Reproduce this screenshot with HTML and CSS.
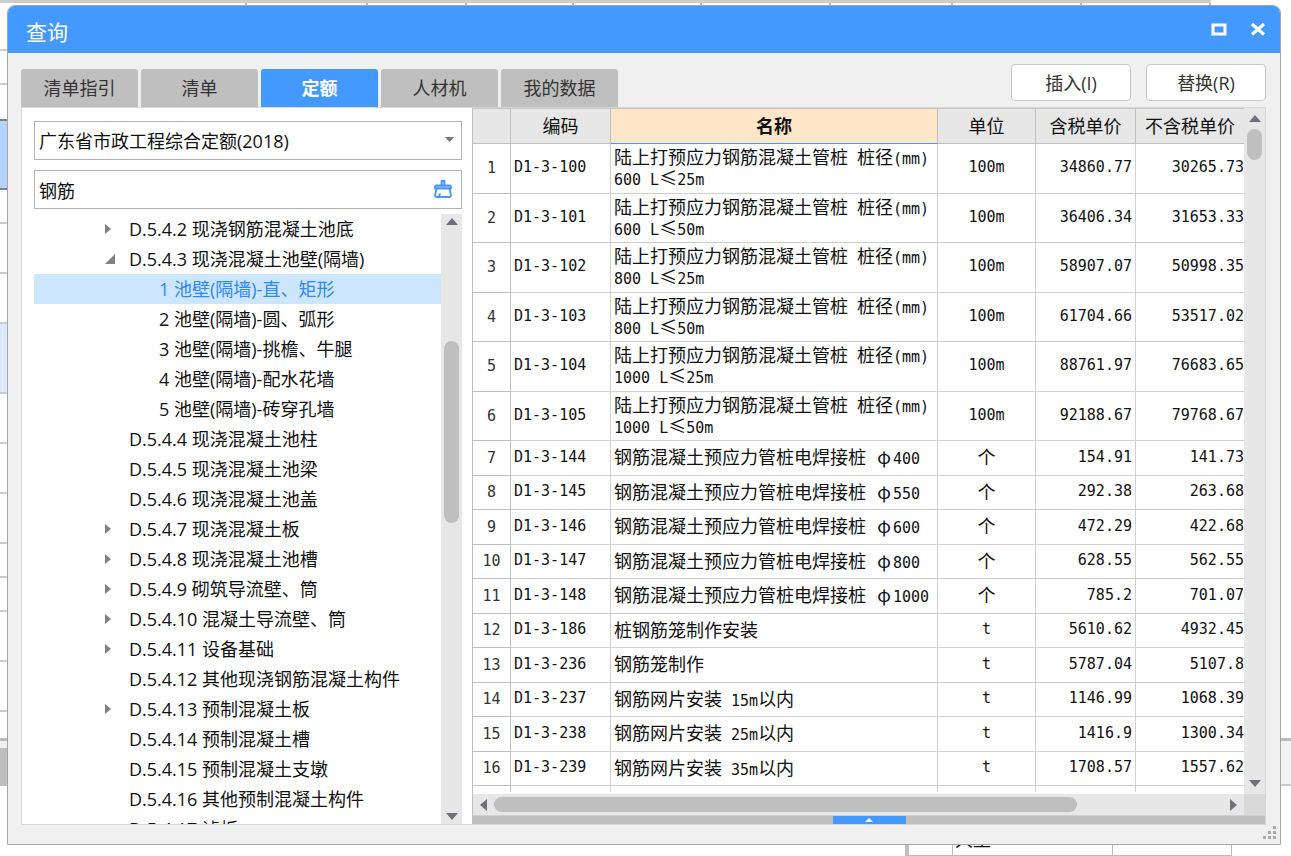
FILE: index.html
```html
<!DOCTYPE html>
<html lang="zh-CN">
<head>
<meta charset="utf-8">
<title>查询</title>
<link rel="stylesheet" href="styles.css">
</head>
<body>
<div class="sheet" aria-hidden="true">
  <div class="sheet-top"><i class="c1"></i><i class="c2"></i><i class="c3"></i><i class="c4"></i><i class="c5"></i><i class="c5"></i><i class="c6"></i><i class="c5"></i><i class="c5"></i></div>
  <div class="sheet-rows">
    <i class="first"></i><i class="short"></i><i class="short dark"></i><i class="picked"></i><i class="short"></i><i></i><i></i><i class="tint"></i><i></i><i></i><i></i><i class="short"></i><i class="short"></i><i></i><i></i><i class="last"></i><i class="strip"></i><i class="bar"></i>
  </div>
  <div class="sheet-side"></div>
  <div class="sheet-bottom"><i class="b1"></i><i class="b2">人工</i><i class="b3"></i></div>
</div>

<main class="dialog">
  <header class="titlebar">
    <h1>查询</h1>
    <button class="winbtn" aria-label="最大化"><svg width="16" height="14" viewBox="0 0 16 14"><rect x="2" y="2" width="12" height="9" fill="none" stroke="#fff" stroke-width="3"/></svg></button>
    <button class="winbtn" aria-label="关闭"><svg width="16" height="14" viewBox="0 0 16 14"><path d="M2 1L14 11.500M14 1L2 11.500" stroke="#fff" stroke-width="3.200" fill="none"/></svg></button>
  </header>

  <div class="toolbar">
    <nav class="tabs">
      <button class="tab">清单指引</button>
      <button class="tab">清单</button>
      <button class="tab active">定额</button>
      <button class="tab">人材机</button>
      <button class="tab">我的数据</button>
    </nav>
    <div class="actions">
      <button class="action">插入(I)</button>
      <button class="action">替换(R)</button>
    </div>
  </div>

  <section class="panel">
    <aside class="side">
      <div class="fields">
        <div class="field">
          <select aria-label="定额库"><option>广东省市政工程综合定额(2018)</option></select>
          <svg class="caret" width="9" height="5" viewBox="0 0 9 5"><path d="M0 0h9L4.500 5z" fill="#777"/></svg>
        </div>
        <div class="field">
          <input type="text" aria-label="搜索" value="钢筋">
          <button class="clear" aria-label="清除"><svg width="20" height="20" viewBox="0 0 20 20" fill="none" stroke="#4a96f8" stroke-width="1.800" stroke-linejoin="round"><path d="M8.500 6V2h3v4M2 9.500V8q0-1.500 1.500-1.500h13q1.500 0 1.500 1.500v1.500z" fill="#9fc8ff"/><path d="M3.500 9.500L2 16.500q0 1.500 1.500 1.500h13q1.500 0 1.500-1.500l-1.500-7M6 17.500q0-2 1.500-3M13 18h3"/></svg></button>
        </div>
      </div>
      <div class="treebox">
        <ul class="tree">
          <li class="closed">D.5.4.2 现浇钢筋混凝土池底</li>
          <li class="open">D.5.4.3 现浇混凝土池壁(隔墙)</li>
          <li class="leaf selected">1 池壁(隔墙)-直、矩形</li>
          <li class="leaf">2 池壁(隔墙)-圆、弧形</li>
          <li class="leaf">3 池壁(隔墙)-挑檐、牛腿</li>
          <li class="leaf">4 池壁(隔墙)-配水花墙</li>
          <li class="leaf">5 池壁(隔墙)-砖穿孔墙</li>
          <li>D.5.4.4 现浇混凝土池柱</li>
          <li>D.5.4.5 现浇混凝土池梁</li>
          <li>D.5.4.6 现浇混凝土池盖</li>
          <li class="closed">D.5.4.7 现浇混凝土板</li>
          <li class="closed">D.5.4.8 现浇混凝土池槽</li>
          <li class="closed">D.5.4.9 砌筑导流壁、筒</li>
          <li class="closed">D.5.4.10 混凝土导流壁、筒</li>
          <li class="closed">D.5.4.11 设备基础</li>
          <li>D.5.4.12 其他现浇钢筋混凝土构件</li>
          <li class="closed">D.5.4.13 预制混凝土板</li>
          <li>D.5.4.14 预制混凝土槽</li>
          <li>D.5.4.15 预制混凝土支墩</li>
          <li>D.5.4.16 其他预制混凝土构件</li>
          <li>D.5.4.17 滤板</li>
        </ul>
        <div class="vscroll tree-scroll">
          <svg width="12" height="7" viewBox="0 0 12 7"><path d="M0 7L6 0l6 7z" fill="#70707a"/></svg>
          <span class="thumb"></span>
          <svg class="end" width="12" height="7" viewBox="0 0 12 7"><path d="M0 0L6 7l6-7z" fill="#70707a"/></svg>
        </div>
      </div>
    </aside>

    <div class="gridbox">
      <div class="gridview">
        <table>
          <colgroup><col class="w-no"><col class="w-code"><col><col class="w-unit"><col class="w-price"><col class="w-net"></colgroup>
          <thead><tr><th></th><th>编码</th><th class="sorted">名称</th><th>单位</th><th>含税单价</th><th>不含税单价</th></tr></thead>
          <tbody>
            <tr class="tall"><td>1</td><td>D1-3-100</td><td>陆上打预应力钢筋混凝土管桩<s> </s>桩径<s>(mm)</s><br><s>600 L</s>≤<s>25m</s></td><td>100m</td><td>34860.77</td><td>30265.73</td></tr>
            <tr class="tall"><td>2</td><td>D1-3-101</td><td>陆上打预应力钢筋混凝土管桩<s> </s>桩径<s>(mm)</s><br><s>600 L</s>≤<s>50m</s></td><td>100m</td><td>36406.34</td><td>31653.33</td></tr>
            <tr class="tall"><td>3</td><td>D1-3-102</td><td>陆上打预应力钢筋混凝土管桩<s> </s>桩径<s>(mm)</s><br><s>800 L</s>≤<s>25m</s></td><td>100m</td><td>58907.07</td><td>50998.35</td></tr>
            <tr class="tall"><td>4</td><td>D1-3-103</td><td>陆上打预应力钢筋混凝土管桩<s> </s>桩径<s>(mm)</s><br><s>800 L</s>≤<s>50m</s></td><td>100m</td><td>61704.66</td><td>53517.02</td></tr>
            <tr class="tall"><td>5</td><td>D1-3-104</td><td>陆上打预应力钢筋混凝土管桩<s> </s>桩径<s>(mm)</s><br><s>1000 L</s>≤<s>25m</s></td><td>100m</td><td>88761.97</td><td>76683.65</td></tr>
            <tr class="tall"><td>6</td><td>D1-3-105</td><td>陆上打预应力钢筋混凝土管桩<s> </s>桩径<s>(mm)</s><br><s>1000 L</s>≤<s>50m</s></td><td>100m</td><td>92188.67</td><td>79768.67</td></tr>
            <tr><td>7</td><td>D1-3-144</td><td>钢筋混凝土预应力管桩电焊接桩<s> </s><b>φ</b><s>400</s></td><td class="cjk">个</td><td>154.91</td><td>141.73</td></tr>
            <tr><td>8</td><td>D1-3-145</td><td>钢筋混凝土预应力管桩电焊接桩<s> </s><b>φ</b><s>550</s></td><td class="cjk">个</td><td>292.38</td><td>263.68</td></tr>
            <tr><td>9</td><td>D1-3-146</td><td>钢筋混凝土预应力管桩电焊接桩<s> </s><b>φ</b><s>600</s></td><td class="cjk">个</td><td>472.29</td><td>422.68</td></tr>
            <tr><td>10</td><td>D1-3-147</td><td>钢筋混凝土预应力管桩电焊接桩<s> </s><b>φ</b><s>800</s></td><td class="cjk">个</td><td>628.55</td><td>562.55</td></tr>
            <tr><td>11</td><td>D1-3-148</td><td>钢筋混凝土预应力管桩电焊接桩<s> </s><b>φ</b><s>1000</s></td><td class="cjk">个</td><td>785.2</td><td>701.07</td></tr>
            <tr><td>12</td><td>D1-3-186</td><td>桩钢筋笼制作安装</td><td>t</td><td>5610.62</td><td>4932.45</td></tr>
            <tr><td>13</td><td>D1-3-236</td><td>钢筋笼制作</td><td>t</td><td>5787.04</td><td>5107.8</td></tr>
            <tr><td>14</td><td>D1-3-237</td><td>钢筋网片安装<s> 15m</s>以内</td><td>t</td><td>1146.99</td><td>1068.39</td></tr>
            <tr><td>15</td><td>D1-3-238</td><td>钢筋网片安装<s> 25m</s>以内</td><td>t</td><td>1416.9</td><td>1300.34</td></tr>
            <tr><td>16</td><td>D1-3-239</td><td>钢筋网片安装<s> 35m</s>以内</td><td>t</td><td>1708.57</td><td>1557.62</td></tr>
            <tr><td></td><td></td><td></td><td></td><td></td><td></td></tr>
          </tbody>
        </table>
      </div>
      <div class="vscroll grid-scroll">
        <svg width="12" height="7" viewBox="0 0 12 7"><path d="M0 7L6 0l6 7z" fill="#70707a"/></svg>
        <span class="thumb"></span>
        <svg class="end" width="12" height="7" viewBox="0 0 12 7"><path d="M0 0L6 7l6-7z" fill="#70707a"/></svg>
      </div>
      <div class="hscroll">
        <svg width="7" height="12" viewBox="0 0 7 12"><path d="M7 0L0 6l7 6z" fill="#70707a"/></svg>
        <span class="track"><span class="thumb"></span></span>
        <svg width="7" height="12" viewBox="0 0 7 12"><path d="M0 0l7 6-7 6z" fill="#70707a"/></svg>
      </div>
      <div class="corner"></div>
      <div class="drawer"><button aria-label="展开"><svg width="8" height="4" viewBox="0 0 8 4"><path d="M0 4l4-4 4 4z" fill="#fff"/></svg></button></div>
    </div>
  </section>
  <svg class="grip" width="13" height="13" viewBox="0 0 13 13" fill="#aaa"><path d="M10 0h3v3h-3zM5 5h3v3H5zM10 5h3v3h-3zM0 10h3v3H0zM5 10h3v3H5zM10 10h3v3h-3z"/></svg>
</main>
</body>
</html>
```
FILE: styles.css
```css
* { box-sizing: border-box; }
html, body { height: 100%; }
body {
  margin: 0;
  padding: 5px 10px 11px 7px;
  overflow: hidden;
  background: #fff;
  color: #111;
  font: 18px/24px "Open Sans", "Noto Sans CJK SC", sans-serif;
}
button, input, select { font: inherit; color: inherit; margin: 0; }
button { border: 0; padding: 0; background: none; }
svg { display: block; flex: none; }

/* worksheet behind the dialog */
.sheet { position: absolute; inset: 0; z-index: -1; overflow: hidden; }
.sheet i { display: block; font-style: normal; }
.sheet-top { display: flex; height: 5px; margin-right: 80px; border-top: 3px solid #ccc; }
.sheet-top i { border-right: 2px solid #bbb; }
.c1 { width: 247px; }
.c2 { width: 121px; }
.c3 { width: 99px; }
.c4 { width: 107px; }
.c5 { width: 129px; }
.c6 { width: 122px; }
.sheet-rows { width: 7px; }
.sheet-rows i { height: 50px; border-bottom: 2px solid #ccc; }
.sheet-rows .first { height: 46px; }
.sheet-rows .short { height: 34px; }
.sheet-rows .dark { border-color: #808080; height: 36px; }
.sheet-rows .picked { height: 69px; background: #b4d3ff; border-color: #808080; }
.sheet-rows .tint { height: 70px; background: #dde9ff; }
.sheet-rows .last { height: 29px; border-bottom: 3px solid #bbb; }
.sheet-rows .strip { height: 7px; background: #f0f0f0; border: 0; }
.sheet-rows .bar { height: 38px; background: #bfbfbf; border: 0; }
.sheet-side { position: absolute; right: 0; top: 738px; width: 20px; height: 48px; background: #f3f3f3; border-top: 3px solid #bbb; border-bottom: 2px solid #ccc; }
.sheet-bottom { position: absolute; right: 59px; bottom: 0; display: flex; height: 22px; border-left: 4px solid #bfbfbf; border-bottom: 1px solid #bbb; }
.sheet-bottom i { border-right: 1px solid #bbb; line-height: 12px; }
.b1 { width: 44px; }
.b2 { width: 160px; padding-left: 2px; }
.b3 { width: 119px; }

.dialog {
  position: relative;
  display: flex;
  flex-direction: column;
  height: 100%;
  padding-bottom: 19px;
  background: #f0f0f0;
  border: 1px solid #a6a6a6;
  border-radius: 8px 8px 0 0;
  overflow: hidden;
}
.titlebar { display: flex; align-items: center; gap: 22px; height: 47px; flex: none; padding: 0 13px 0 18px; background: #4499ff; color: #fff; }
.titlebar h1 { flex: 1; margin: 0; padding-top: 4px; font-size: 21px; font-weight: 400; }
.winbtn { width: 17px; height: 14px; }

.toolbar { display: flex; justify-content: space-between; align-items: flex-end; height: 54px; flex: none; padding: 0 14px 0 13px; }
.tabs { display: flex; gap: 3px; }
.tab { width: 117px; height: 38px; background: #bfbfbf; border-radius: 3px 3px 0 0; color: #333; }
.tab.active { background: #4499ff; color: #fff; font-weight: 700; }
.actions { display: flex; gap: 15px; padding-bottom: 6px; }
.action { width: 120px; height: 37px; background: #fff; border: 1px solid #c8c8c8; border-radius: 4px; color: #333; }

.panel { display: flex; flex: 1; min-height: 0; margin: 0 14px 0 13px; border: 1px solid #d6d6d6; background: #fff; }
.side { display: flex; flex-direction: column; width: 450px; flex: none; padding: 13px 10px 0 12px; gap: 5px; }
.fields { display: flex; flex-direction: column; gap: 10px; }
.field { position: relative; height: 39px; flex: none; }
.field select, .field input { width: 100%; height: 100%; padding: 0 4px; appearance: none; background: #fff; border: 1px solid #b4b4b4; border-radius: 0; outline: 0; }
.caret { position: absolute; right: 8px; top: 16px; pointer-events: none; }
.clear { position: absolute; right: 9px; top: 9px; }

.treebox { display: flex; flex: 1; min-height: 0; }
.tree { flex: 1; margin: 0; padding: 0; list-style: none; overflow: hidden; white-space: nowrap; }
.tree li { display: flex; align-items: center; height: 30px; padding-left: 95px; }
.tree .closed, .tree .open { padding-left: 71px; }
.tree .closed::before, .tree .open::before { content: ""; width: 24px; height: 10px; flex: none; background: #808080; }
.tree .closed::before { clip-path: polygon(0 0, 6px 50%, 0 100%); }
.tree .open::before { clip-path: polygon(0 100%, 10px 100%, 10px 0); }
.tree .leaf { padding-left: 125px; }
.tree .selected { background: #cce6ff; color: #2f86f6; }

.vscroll { display: flex; flex-direction: column; align-items: center; width: 21px; background: #e7e7e7; }
.thumb { display: block; background: #bfbfbf; border-radius: 8px; }
.vscroll .thumb { width: 15px; }
.end { margin-top: auto; }
.tree-scroll { padding: 4px 0; }
.tree-scroll .thumb { margin-top: 116px; height: 182px; }
.grid-scroll { padding: 7px 0; }
.grid-scroll .thumb { margin-top: 7px; height: 31px; }

.gridbox { display: grid; grid-template: minmax(0, 1fr) 21px 9px / minmax(0, 1fr) 21px; flex: 1; min-width: 0; border-left: 1px solid #bfbfbf; }
.gridview { overflow: hidden; border-top: 1px solid #c4c4c4; border-bottom: 2px solid #fff; }
table { width: 100%; table-layout: fixed; border-collapse: separate; border-spacing: 0; }
.w-no { width: 38px; }
.w-code { width: 100px; }
.w-unit { width: 98px; }
.w-price { width: 100px; }
.w-net { width: 108px; }
th { height: 35px; padding: 0; background: #e7e7e7; border: solid #bfbfbf; border-width: 0 1px 1px 0; font-weight: 400; white-space: nowrap; }
.sorted { background: #ffe6c8; border-bottom-color: #4499ff; font-weight: 700; }
th:last-child { border-right: 0; }
td { height: 34px; padding: 0 3px 2px; border: solid #d0d0d0; border-width: 0 1px 1px 0; font: 15px/21px "DejaVu Sans Mono", monospace; white-space: nowrap; }
tr:nth-child(odd) td { height: 35px; }
.tall td { height: 49px; }
.tall:nth-child(odd) td { height: 50px; }
td:first-child { padding-bottom: 0; text-align: center; border-color: #bfbfbf; color: #333; }
td:nth-child(3), td.cjk { padding-bottom: 3px; font: 18px/21px "Noto Sans CJK SC", sans-serif; }
td:nth-child(4) { text-align: center; }
td:nth-child(5) { text-align: right; }
td:nth-child(6) { text-align: right; padding-right: 0; border-right: 0; }
td s { font: 15px/1px "DejaVu Sans Mono", monospace; text-decoration: none; white-space: pre; }
td b { display: inline-block; width: 18px; font-weight: 400; text-align: center; }

.hscroll { display: flex; align-items: center; gap: 7px; padding: 0 7px; background: #e7e7e7; }
.track { flex: 1; }
.hscroll .thumb { width: 80%; height: 15px; }
.corner { background: #d9d9d9; }
.drawer { grid-column: 1 / -1; display: flex; justify-content: center; background: #bfbfbf; border-top: 1px solid #d0d0d0; }
.drawer button { display: flex; justify-content: center; align-items: center; width: 73px; background: #4499ff; }
.grip { position: absolute; right: 4px; bottom: 5px; }
```
